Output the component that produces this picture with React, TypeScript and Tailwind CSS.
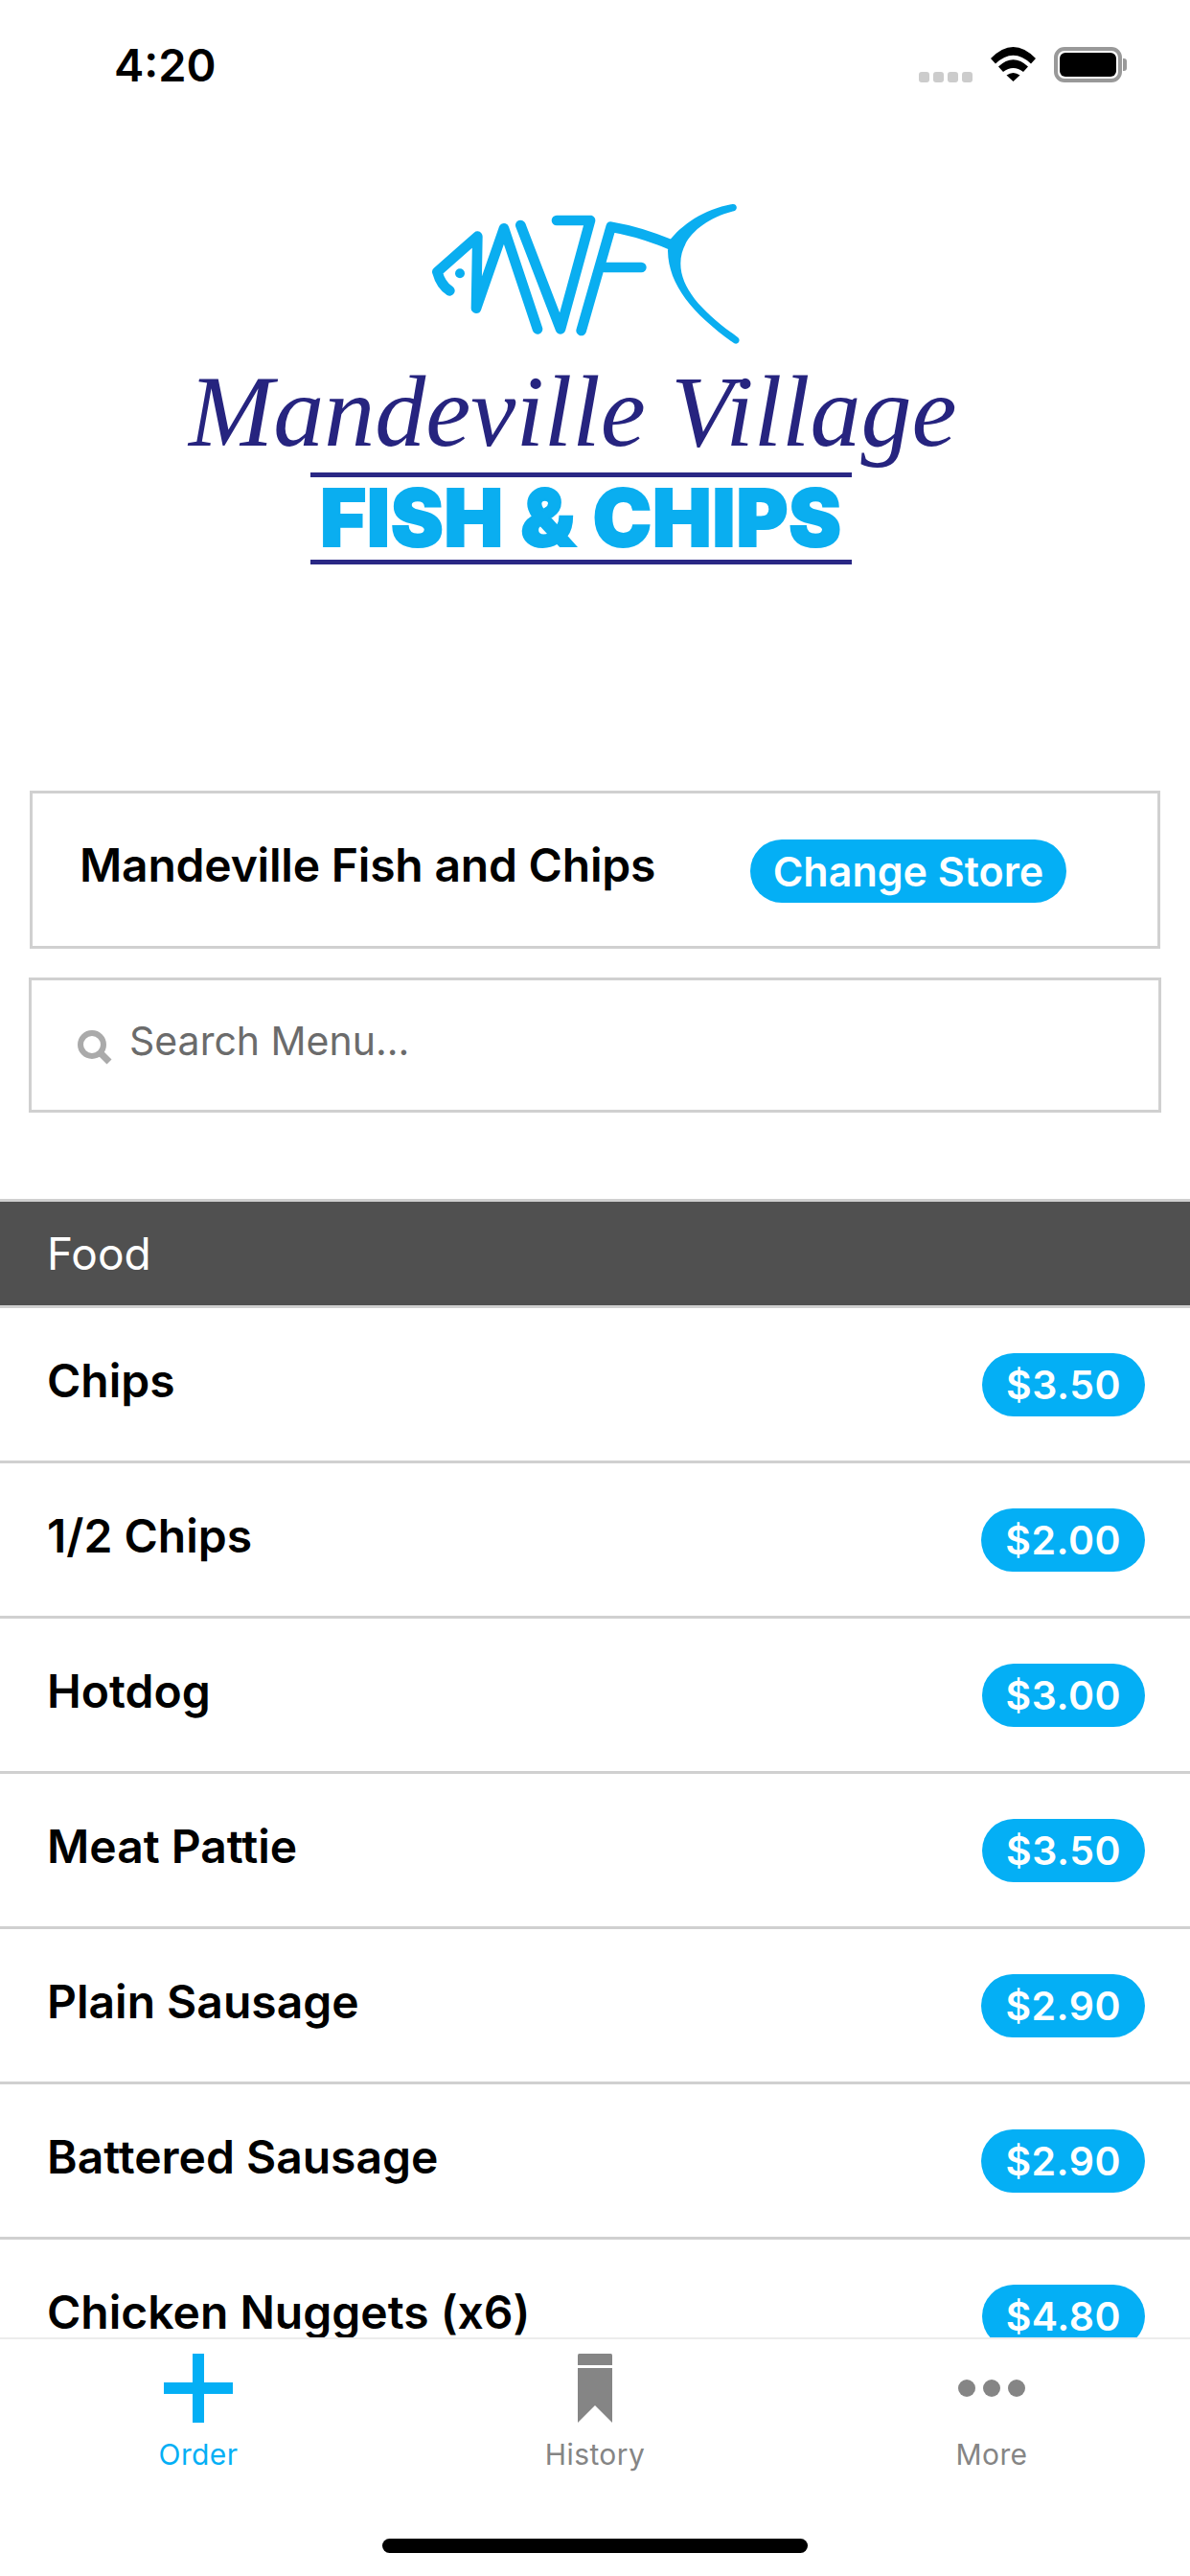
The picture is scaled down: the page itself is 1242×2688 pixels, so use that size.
const BLUE = "#04aff5";

const menuItems = [
  { name: "Chips", price: "$3.50" },
  { name: "1/2 Chips", price: "$2.00" },
  { name: "Hotdog", price: "$3.00" },
  { name: "Meat Pattie", price: "$3.50" },
  { name: "Plain Sausage", price: "$2.90" },
  { name: "Battered Sausage", price: "$2.90" },
  { name: "Chicken Nuggets (x6)", price: "$4.80" },
];

const StatusBar = () => (
  <div className="h-[130px] shrink-0 flex items-start pl-[119px] pt-[44px]">
    <span className="text-[47px] leading-[48px] font-semibold text-black w-[840px]">4:20</span>
    <div className="flex gap-[4px] mt-[31px]">
      {[0, 1, 2, 3].map((i) => (
        <div key={i} className="w-[11px] h-[11px] rounded-[3px] bg-[#cccccc]" />
      ))}
    </div>
    <svg className="ml-[19px] mt-[5px]" width="47" height="36" viewBox="0 0 47 36">
      <path d="M0 12 Q23.5 -12 47 12 L42 17.5 Q23.5 0 5 17.5 Z" fill="#000" />
      <path d="M8 20.5 Q23.5 6 39 20.5 L34 26 Q23.5 18 13 26 Z" fill="#000" />
      <path d="M16.5 29.5 Q23.5 24.5 30.5 29.5 L23.5 36 Z" fill="#000" />
    </svg>
    <div className="ml-[19px] mt-[5px] w-[71px] h-[37px] rounded-[11px] border-[4px] border-[#999999] p-[2px]">
      <div className="w-full h-full rounded-[6px] bg-black" />
    </div>
    <div className="mt-[17px] ml-[1px] w-[4px] h-[13px] rounded-r-[3px] bg-[#999999]" />
  </div>
);

const Logo = () => (
  <div className="h-[695px] shrink-0 flex flex-col items-start pt-[75px]">
    <svg className="ml-[441px]" width="350" height="165" viewBox="0 0 1050 495">
      <g fill="none" stroke="#0aaef0" strokeWidth="32" strokeLinecap="round" strokeLinejoin="round">
        <path d="M85 295 C60 280 52 258 46 236 L172 125 L168 350 L255 100 L360 415" />
        <path d="M307 90 L432 415 L525 75 L420 75" />
        <path d="M497 420 L590 95 Q680 110 775 150" />
        <path d="M570 222 L685 222" />
      </g>
      <circle cx="117" cy="241" r="15" fill="#0aaef0" />
      <path
        d="M970 24 C880 40 810 90 772 140 L768 170 C770 280 850 370 976 460 C990 466 998 448 986 440 C880 365 808 290 808 210 C808 130 880 70 975 46 C988 42 986 22 970 24 Z"
        fill="#0aaef0"
      />
    </svg>
    <div className="ml-[197px] mt-[5px] w-[810px] whitespace-nowrap [font-family:'Liberation_Serif',serif] italic text-[106px] leading-[110px] text-[#26247f]">
      Mandeville Village
    </div>
    <div className="ml-[324px] mt-[8px] w-[565px] flex flex-col items-center">
      <div className="w-full h-[5px] bg-[#2a2885]" />
      <div className="h-[86px] flex items-center whitespace-nowrap text-[#0aaef0] font-black text-[82px] leading-[86px] tracking-[1px] [-webkit-text-stroke:2px_#0aaef0]">
        FISH &amp; CHIPS
      </div>
      <div className="w-full h-[5px] bg-[#2a2885]" />
    </div>
  </div>
);

const StoreBox = () => (
  <div className="mx-[31px] h-[165px] shrink-0 border-[3px] border-[#d0d0d0] flex items-center pl-[49px] pr-[95px]">
    <span className="mb-[9px] text-[48px] font-semibold text-black whitespace-nowrap tracking-[-0.2px]">
      Mandeville Fish and Chips
    </span>
    <button className="ml-auto mt-[3px] h-[66px] w-[330px] rounded-[33px] bg-[#04aff5] text-white text-[43px] font-semibold whitespace-nowrap">
      Change Store
    </button>
  </div>
);

const SearchBox = () => (
  <div className="mx-[30px] mt-[30px] h-[141px] shrink-0 border-[3px] border-[#d0d0d0] flex items-center pl-[48px]">
    <svg className="mt-[4px]" width="36" height="36" viewBox="0 0 36 36">
      <circle cx="15" cy="15" r="12" fill="none" stroke="#aaaaaa" strokeWidth="6" />
      <path d="M23 23 L33 33" stroke="#aaaaaa" strokeWidth="7" />
    </svg>
    <span className="ml-[18px] mb-[7px] text-[41px] text-[#6b6b6b] whitespace-nowrap">Search Menu...</span>
  </div>
);

const MenuRow = ({ name, price }: { name: string; price: string }) => (
  <div className="h-[162px] shrink-0 border-b-[3px] border-[#d0d0d0] flex items-center pl-[49px] pr-[47px]">
    <span className="mb-[7px] text-[48px] font-semibold text-black whitespace-nowrap">{name}</span>
    <span className="ml-auto mt-[1px] h-[66px] px-[25px] rounded-[33px] bg-[#04aff5] text-white text-[41px] leading-[66px] font-semibold tracking-[0.5px]">
      {price}
    </span>
  </div>
);

const TabBar = () => (
  <div className="h-[249px] shrink-0 border-t-[2px] border-[#ececec] bg-white flex flex-col">
    <div className="grid grid-cols-3 pt-[15px]">
      <div className="flex flex-col items-center">
        <div className="relative w-[72px] h-[72px]">
          <div className="absolute left-[30px] top-0 w-[12px] h-[72px]" style={{ background: BLUE }} />
          <div className="absolute left-0 top-[30px] w-[72px] h-[12px]" style={{ background: BLUE }} />
        </div>
        <span className="mt-[15px] text-[30px] leading-[36px] tracking-[0.4px] text-[#04aff5]">Order</span>
      </div>
      <div className="flex flex-col items-center">
        <svg width="36" height="72" viewBox="0 0 36 72">
          <path d="M1.5 0 H34.5 Q36 0 36 1.5 V12 H0 V1.5 Q0 0 1.5 0 Z" fill="#858585" />
          <path d="M0 15 H36 V72 L18 54 L0 72 Z" fill="#858585" />
        </svg>
        <span className="mt-[15px] text-[30px] leading-[36px] tracking-[0.4px] text-[#858585]">History</span>
      </div>
      <div className="flex flex-col items-center">
        <div className="h-[72px] flex items-center gap-[8px]">
          {[0, 1, 2].map((i) => (
            <div key={i} className="w-[18px] h-[18px] rounded-full bg-[#858585]" />
          ))}
        </div>
        <span className="mt-[15px] text-[30px] leading-[36px] tracking-[0.4px] text-[#858585]">More</span>
      </div>
    </div>
    <div className="mt-auto mb-[24px] mx-auto w-[444px] h-[15px] rounded-full bg-black" />
  </div>
);

export default function App() {
  return (
    <div className="w-[1242px] h-[2688px] overflow-hidden bg-white flex flex-col [font-family:Inter,sans-serif]">
      <StatusBar />
      <Logo />
      <StoreBox />
      <SearchBox />
      <div className="mt-[90px] flex-1 min-h-0 overflow-hidden flex flex-col border-t-[3px] border-[#d0d0d0]">
        <div className="h-[111px] shrink-0 bg-[#505050] border-b-[3px] border-[#d0d0d0] flex items-center pl-[49px]">
          <span className="text-[46px] text-white">Food</span>
        </div>
        {menuItems.map((item) => (
          <MenuRow key={item.name} name={item.name} price={item.price} />
        ))}
      </div>
      <TabBar />
    </div>
  );
}
